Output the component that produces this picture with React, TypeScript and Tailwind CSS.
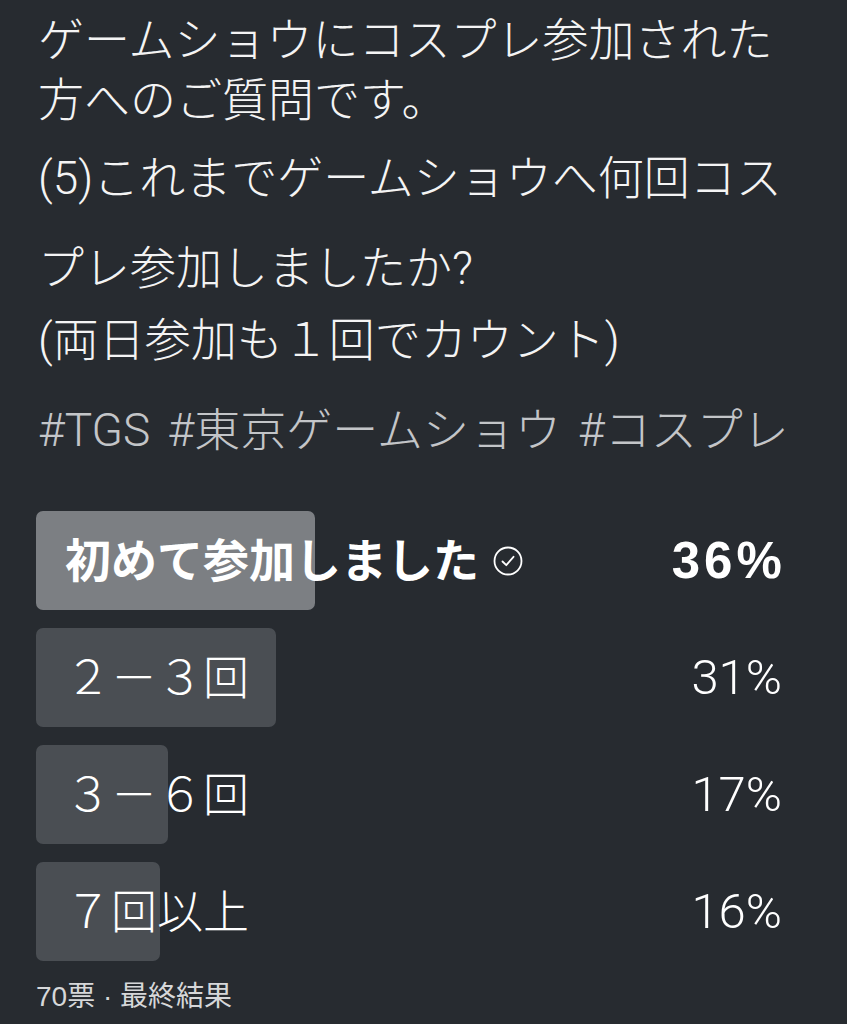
import React from "react";

type Option = {
  label: string;
  pct: number;
  winner?: boolean;
};

const options: Option[] = [
  { label: "初めて参加しました", pct: 36, winner: true },
  { label: "２－３回", pct: 31 },
  { label: "３－６回", pct: 17 },
  { label: "７回以上", pct: 16 },
];

const FONT = "font-['Liberation_Sans','Noto_Sans_CJK_JP',sans-serif]";
const LIGHT = "font-['Roboto','Noto_Sans_CJK_JP',sans-serif] font-light";

const CheckCircle = () => (
  <svg width="30" height="30" viewBox="0 0 30 30" fill="none" className="shrink-0">
    <circle cx="15" cy="15" r="13.5" stroke="#ffffff" strokeWidth="1.8" />
    <path d="M9.5 15.5 L13.3 19.2 L20.5 10.8" stroke="#ffffff" strokeWidth="1.8" strokeLinecap="round" strokeLinejoin="round" />
  </svg>
);

const PollRow: React.FC<{ option: Option }> = ({ option }) => (
  <div className="relative flex h-[99px] items-center justify-between">
    <div
      className={`absolute left-0 top-0 h-full rounded-[7px] ${option.winner ? "bg-[#7c7f83]" : "bg-[#4a4e53]"}`}
      style={{ width: `${option.pct}%` }}
    />
    <div className="relative flex items-center gap-[14px] pl-[29px]">
      <span className={`text-[46px] leading-none text-white ${option.winner ? "font-bold" : LIGHT}`}>
        {option.label}
      </span>
      {option.winner && <CheckCircle />}
    </div>
    {option.winner ? (
      <span className="relative pr-[25px] text-[51px] font-bold leading-none tracking-[0.08em] text-white">
        {option.pct}%
      </span>
    ) : (
      <span className={`relative pr-[29px] text-[49px] leading-none text-white ${LIGHT}`}>
        {option.pct}%
      </span>
    )}
  </div>
);

export default function App() {
  return (
    <div className={`min-h-[1024px] w-[847px] bg-[#272b30] ${FONT} text-[#f4f4f4]`}>
      <div className={`pt-[10px] pl-[38px] text-[46px] whitespace-nowrap ${LIGHT}`}>
        <div className="leading-[60px]">ゲームショウにコスプレ参加された</div>
        <div className="leading-[60px]">方へのご質問です。</div>
        <div className="mt-[18px] leading-[60px]">(5)これまでゲームショウへ何回コス</div>
        <div className="mt-[30px] leading-[60px]">プレ参加しましたか?</div>
        <div className="mt-[12px] leading-[60px]">(両日参加も１回でカウント)</div>
        <div className="mt-[30px] leading-[60px] text-[#c3c5c8] [word-spacing:6px]">
          #TGS #東京ゲームショウ #コスプレ
        </div>
      </div>

      <div className="mt-[51px] ml-[36px] flex w-[775px] flex-col gap-[18px]">
        {options.map((o) => (
          <PollRow key={o.label} option={o} />
        ))}
      </div>

      <div className="mt-[18px] pl-[36px] text-[28px] leading-[36px] text-[#d6d7d9]">
        70票 · 最終結果
      </div>
    </div>
  );
}
